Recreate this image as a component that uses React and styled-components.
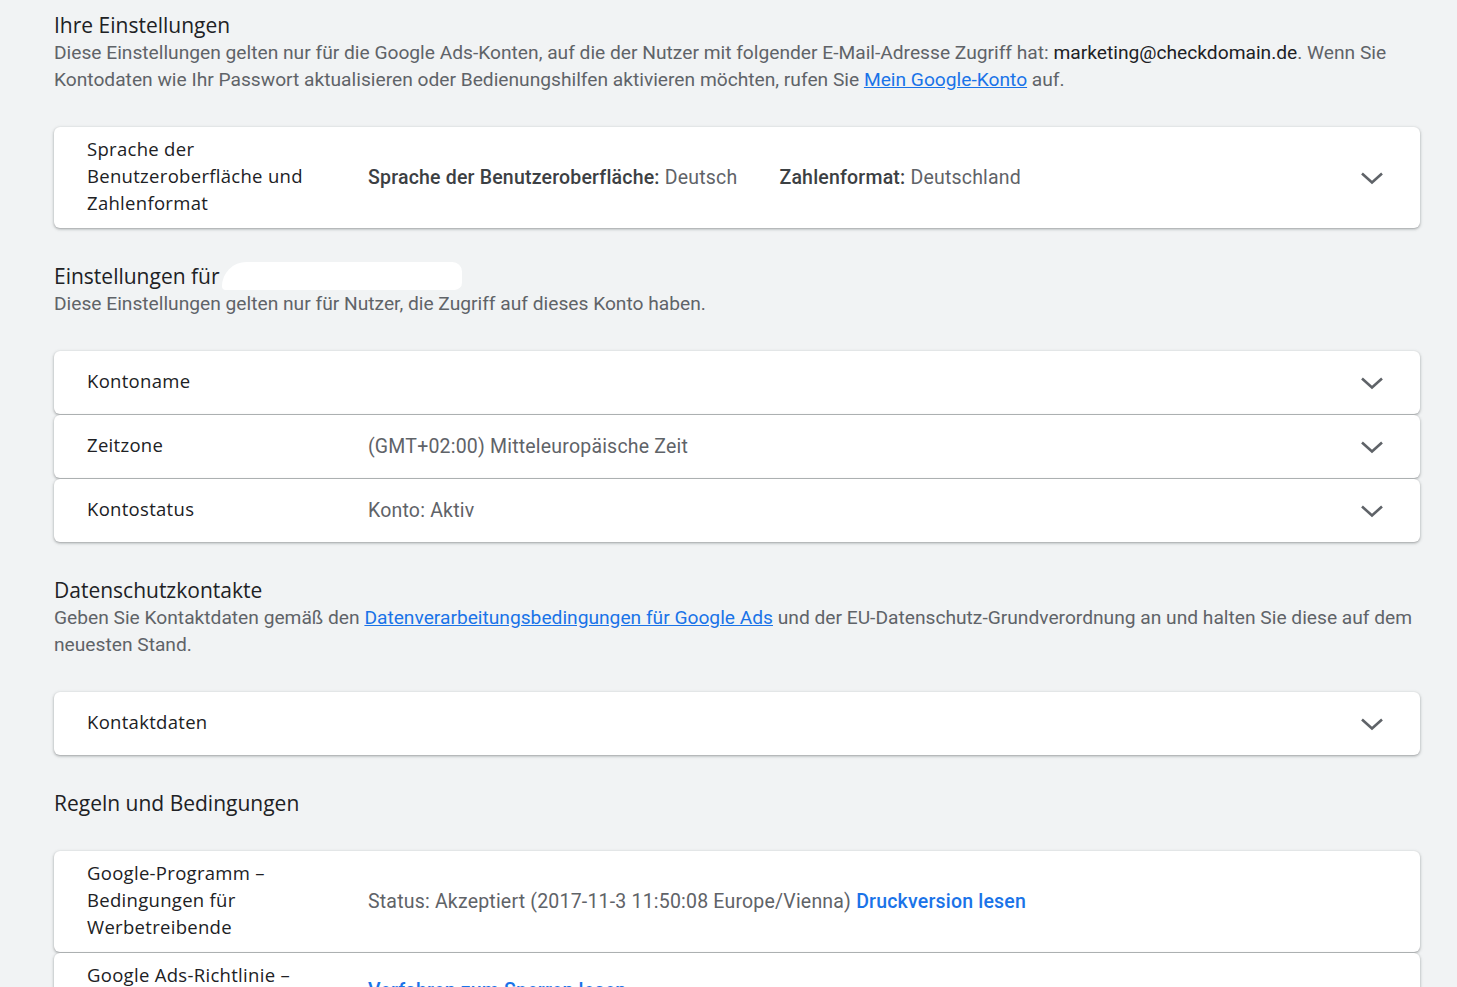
import React from "react";
import styled, { createGlobalStyle } from "styled-components";

const GlobalStyle = createGlobalStyle`
  body {
    margin: 0;
    background: #f1f3f4;
    font-family: Roboto, "Liberation Sans", sans-serif;
  }
`;

const Chevron = () => (
  <svg width="24" height="24" viewBox="0 0 24 24">
    <path d="M2 7.5 L12 16.5 L22 7.5" fill="none" stroke="#5f6368" strokeWidth="2.6" />
  </svg>
);

const App = () => {
  return (
    <>
      <GlobalStyle />
      <Page>
        <Section>
          <Title>Ihre Einstellungen</Title>
          <Desc>
            Diese Einstellungen gelten nur für die Google Ads-Konten, auf die der Nutzer mit
            folgender E-Mail-Adresse Zugriff hat: <Strong>marketing@checkdomain.de</Strong>. Wenn Sie
            Kontodaten wie Ihr Passwort aktualisieren oder Bedienungshilfen aktivieren möchten,
            rufen Sie <Link href="#">Mein Google-Konto</Link> auf.
          </Desc>
        </Section>
        <Group>
          <Row>
            <Label>Sprache der Benutzeroberfläche und Zahlenformat</Label>
            <Values>
              <Value>
                <Key>Sprache der Benutzeroberfläche:</Key> Deutsch
              </Value>
              <Value>
                <Key>Zahlenformat:</Key> Deutschland
              </Value>
            </Values>
            <Expand>
              <Chevron />
            </Expand>
          </Row>
        </Group>

        <Section>
          <Title>
            Einstellungen für <Redacted />
          </Title>
          <Desc>Diese Einstellungen gelten nur für Nutzer, die Zugriff auf dieses Konto haben.</Desc>
        </Section>
        <Group>
          <Row>
            <Label>Kontoname</Label>
            <Values />
            <Expand>
              <Chevron />
            </Expand>
          </Row>
          <Row>
            <Label>Zeitzone</Label>
            <Values>
              <Value>(GMT+02:00) Mitteleuropäische Zeit</Value>
            </Values>
            <Expand>
              <Chevron />
            </Expand>
          </Row>
          <Row>
            <Label>Kontostatus</Label>
            <Values>
              <Value>Konto: Aktiv</Value>
            </Values>
            <Expand>
              <Chevron />
            </Expand>
          </Row>
        </Group>

        <Section>
          <Title>Datenschutzkontakte</Title>
          <Desc>
            Geben Sie Kontaktdaten gemäß den{" "}
            <Link href="#">Datenverarbeitungsbedingungen für Google Ads</Link> und der
            EU-Datenschutz-Grundverordnung an und halten Sie diese auf dem neuesten Stand.
          </Desc>
        </Section>
        <Group>
          <Row>
            <Label>Kontaktdaten</Label>
            <Values />
            <Expand>
              <Chevron />
            </Expand>
          </Row>
        </Group>

        <Section>
          <Title>Regeln und Bedingungen</Title>
        </Section>
        <Group>
          <Row>
            <Label>Google-Programm – Bedingungen für Werbetreibende</Label>
            <Values>
              <Value>
                Status: Akzeptiert (2017-11-3 11:50:08 Europe/Vienna){" "}
                <ActionLink href="#">Druckversion lesen</ActionLink>
              </Value>
            </Values>
          </Row>
          <Row>
            <Label>Google Ads-Richtlinie – Kontosperrungen</Label>
            <Values>
              <Value>
                <ActionLink href="#" $underline>
                  Verfahren zum Sperren lesen
                </ActionLink>
              </Value>
            </Values>
          </Row>
        </Group>
      </Page>
    </>
  );
};

const Page = styled.div`
  padding: 11px 37px 40px 54px;
`;

const Section = styled.div`
  margin-bottom: 34px;
`;

const Title = styled.h2`
  margin: 0;
  display: flex;
  align-items: center;
  gap: 2px;
  height: 28px;
  font-family: "Open Sans", Roboto, sans-serif;
  font-weight: 400;
  font-size: 21px;
  line-height: 28px;
  color: #202124;
`;

const Redacted = styled.span`
  display: inline-block;
  width: 240px;
  height: 28px;
  background: #ffffff;
  border-radius: 40px 16px 12px 6px;
`;

const Desc = styled.p`
  margin: 0;
  font-size: 19.2px;
  line-height: 27px;
  color: #5f6368;
`;

const Strong = styled.span`
  color: #202124;
`;

const Link = styled.a`
  color: #1a73e8;
  text-decoration: underline;
`;

const Group = styled.div`
  display: flex;
  flex-direction: column;
  gap: 1px;
  margin-bottom: 34px;
`;

const Row = styled.div`
  display: grid;
  grid-template-columns: 281px 1fr 60px;
  align-items: center;
  min-height: 63px;
  box-sizing: border-box;
  padding: 10px 0 10px 33px;
  background: #ffffff;
  border-radius: 6px;
  box-shadow: 0 1px 2px rgba(60, 64, 67, 0.3), 0 1px 3px 1px rgba(60, 64, 67, 0.15);
`;

const Label = styled.div`
  width: 240px;
  transform: translateY(-2px);
  font-family: "Open Sans", Roboto, sans-serif;
  font-size: 18.5px;
  letter-spacing: 0.3px;
  line-height: 27px;
  color: #202124;
`;

const Values = styled.div`
  display: flex;
  gap: 42px;
`;

const Value = styled.div`
  font-size: 19.5px;
  letter-spacing: 0.2px;
  line-height: 27px;
  color: #5f6368;
`;

const Key = styled.span`
  font-weight: 500;
  color: #3c4043;
`;

const ActionLink = styled.a`
  color: #1a73e8;
  font-weight: 500;
  text-decoration: ${(p) => (p.$underline ? "underline" : "none")};
`;

const Expand = styled.div`
  display: flex;
  justify-content: flex-start;
  align-items: center;
`;

export default App;
